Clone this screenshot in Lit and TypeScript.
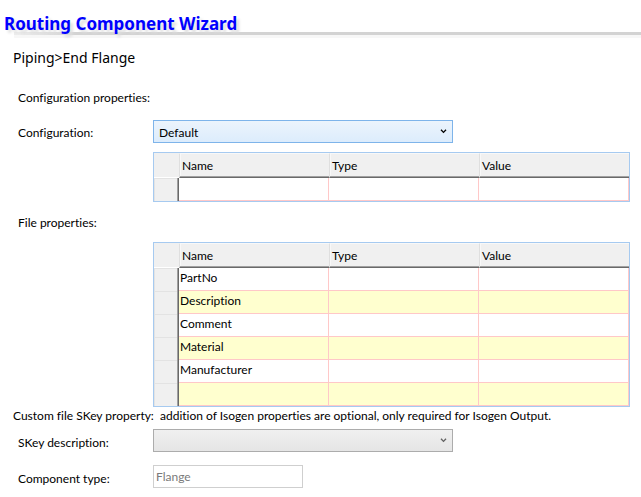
import { LitElement, html, css } from "lit";
import { customElement, property } from "lit/decorators.js";

const base = css`
  * {
    box-sizing: border-box;
  }
`;

/** Editable property table with a row-selector gutter. */
@customElement("property-grid")
export class PropertyGrid extends LitElement {
  @property({ attribute: false }) rows: string[] = [];
  @property() caption = "";

  static styles = [
    base,
    css`
      :host {
        display: block;
        border: 1px solid #a6caf0;
      }
      .grid {
        width: 100%;
        table-layout: fixed;
        border-collapse: separate;
        border-spacing: 0;
        background: #fff;
      }
      .gutter {
        width: 25px;
      }
      th,
      td {
        padding: 0;
        text-align: left;
        font-weight: 400;
        white-space: nowrap;
        overflow: hidden;
      }
      .head {
        height: 25px;
        padding: 0 3px 0 2px;
        line-height: 20px;
        background: #f0f0f0;
        border-top: 1px solid #f8f8f8;
        border-left: 1px solid #dfdfdf;
        border-bottom: 1px solid #696969;
        box-shadow: inset 0 -1px #a0a0a0, inset 1px 0 #f8f8f8;
      }
      .corner {
        height: 25px;
        background: #f0f0f0;
        border-bottom: 1px solid #fff;
      }
      .selector {
        height: 23px;
        background: #f0f0f0;
        border-right: 1px solid #696969;
        box-shadow: inset -1px 0 #a0a0a0, inset 1px 1px #e3e3e3;
      }
      .cell {
        height: 23px;
        padding: 0 2px 2px;
        line-height: 20px;
        border-right: 1px solid #ffc8c8;
        border-bottom: 1px solid #ffc8c8;
      }
      .name {
        padding-left: 1px;
      }
      .alt .cell {
        background: #ffffcf;
      }
    `,
  ];

  render() {
    return html`
      <table class="grid" aria-label=${this.caption}>
        <colgroup>
          <col class="gutter" />
          <col />
          <col />
          <col />
        </colgroup>
        <thead>
          <tr>
            <td class="corner"></td>
            <th class="head" scope="col">Name</th>
            <th class="head" scope="col">Type</th>
            <th class="head" scope="col">Value</th>
          </tr>
        </thead>
        <tbody>
          ${this.rows.map(
            (name, i) => html`
              <tr class=${i % 2 ? "alt" : "plain"}>
                <td class="selector"></td>
                <td class="cell name">${name}</td>
                <td class="cell"></td>
                <td class="cell"></td>
              </tr>
            `
          )}
        </tbody>
      </table>
    `;
  }
}

@customElement("app-root")
export class AppRoot extends LitElement {
  static styles = [
    base,
    css`
      :host {
        display: block;
        background: #fff;
        color: #000;
        font: 12px/16px Lato, "Open Sans", sans-serif;
        font-variant-ligatures: none;
      }
      .banner {
        position: relative;
        height: 40px;
        padding: 12px 4px 0;
      }
      .banner::before {
        content: "";
        position: absolute;
        top: 32px;
        left: 14px;
        right: 0;
        height: 3px;
        background: linear-gradient(90deg, #eee, #d3d3d3 60px);
        box-shadow: 0 3px 1px #f7f7f7;
      }
      .title {
        position: relative;
        margin: 0;
        font-family: "Noto Sans", "Open Sans", sans-serif;
        font-size: 17px;
        line-height: 24px;
        font-weight: 700;
        color: #0000ff;
        text-shadow: 3px 3px 3px #ddd;
      }
      .trail {
        margin: 0;
        padding: 8px 13px 0;
        font-family: "Noto Sans", "Open Sans", sans-serif;
        font-size: 14px;
        line-height: 20px;
      }
      .form {
        display: grid;
        grid-template-columns: 135px minmax(0, 1fr);
        padding: 0 11px 0 18px;
      }
      .section {
        grid-column: 1 / -1;
        margin: 0;
        font-size: 12px;
        line-height: 16px;
        font-weight: 400;
      }
      .first {
        padding: 22px 0 14px;
      }
      .second {
        padding: 13px 0 11px;
      }
      .label {
        padding-top: 5px;
      }
      .fields .label {
        padding-top: 6px;
      }
      .table {
        grid-column: 2;
      }
      .picker {
        position: relative;
        width: 100%;
        max-width: 300px;
        height: 23px;
      }
      .select {
        display: block;
        width: 100%;
        height: 23px;
        padding: 2px 20px 0 5px;
        appearance: none;
        border: 1px solid #7eb4ea;
        border-radius: 0;
        background: linear-gradient(#ecf4fc, #dcecfc);
        color: #000;
        font: inherit;
        outline: none;
      }
      .muted .select {
        border-color: #acacac;
        background: linear-gradient(#f0f0f0, #e5e5e5);
      }
      .chevron {
        position: absolute;
        top: 9px;
        right: 6px;
        width: 7px;
        height: 5px;
        pointer-events: none;
        fill: none;
        stroke: #000;
        stroke-width: 1.3;
      }
      .muted .chevron {
        stroke: #606060;
      }
      .config {
        padding-top: 9px;
      }
      .note {
        margin: 0;
        padding: 1px 13px 5px;
        line-height: 16px;
        white-space: pre-wrap;
      }
      .fields {
        row-gap: 13px;
      }
      .input {
        width: 100%;
        max-width: 150px;
        height: 23px;
        padding: 0 2px;
        border: 1px solid #cfcfcf;
        border-radius: 0;
        background: #fff;
        color: #7a7a7a;
        font: inherit;
      }
    `,
  ];

  private chevron() {
    return html`<svg class="chevron" viewBox="0 0 7 5" aria-hidden="true">
      <path d="M1 0.7 L3.5 3.4 L6 0.7" />
    </svg>`;
  }

  render() {
    return html`
      <header class="banner"><h1 class="title">Routing Component Wizard</h1></header>
      <p class="trail">Piping&gt;End Flange</p>
      <div class="form">
        <h2 class="section first">Configuration properties:</h2>
        <label class="label" for="config">Configuration:</label>
        <div class="picker">
          <select class="select" id="config">
            <option>Default</option>
          </select>
          ${this.chevron()}
        </div>
        <div class="table config">
          <property-grid caption="Configuration properties" .rows=${[""]}></property-grid>
        </div>
        <h2 class="section second">File properties:</h2>
        <div class="table">
          <property-grid
            caption="File properties"
            .rows=${["PartNo", "Description", "Comment", "Material", "Manufacturer", ""]}
          ></property-grid>
        </div>
      </div>
      <p class="note">Custom file SKey property:  addition of Isogen properties are optional, only required for Isogen Output.</p>
      <div class="form fields">
        <label class="label" for="skey">SKey description:</label>
        <div class="picker muted">
          <select class="select" id="skey">
            <option></option>
          </select>
          ${this.chevron()}
        </div>
        <label class="label" for="kind">Component type:</label>
        <input class="input" id="kind" type="text" value="Flange" disabled />
      </div>
    `;
  }
}
